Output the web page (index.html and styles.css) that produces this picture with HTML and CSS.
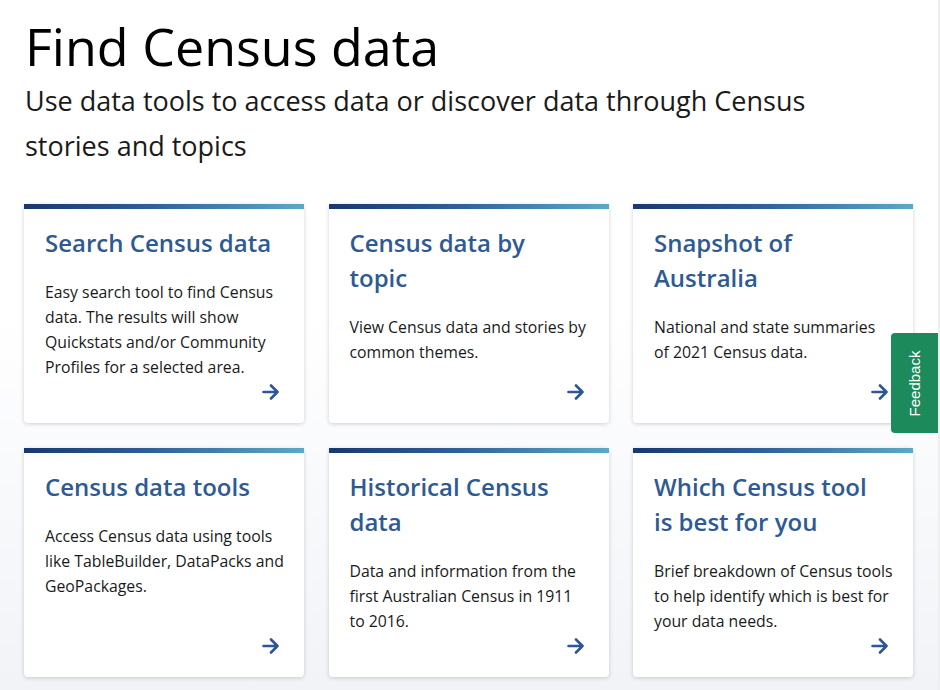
FILE: index.html
```html
<!DOCTYPE html>
<html lang="en">
<head>
    <meta charset="UTF-8">
    <title>Find Census data</title>
    <link rel="stylesheet" href="styles.css">
</head>
<body>
<div class="page">
    <h1>Find Census data</h1>
    <p class="intro">Use data tools to access data or discover data through Census stories and topics</p>

    <div class="cards">
        <a class="card" href="#">
            <h2>Search Census data</h2>
            <p>Easy search tool to find Census data. The results will show Quickstats and/or Community Profiles for a selected area.</p>
            <span class="arrow"><svg width="18" height="16" viewBox="0 0 18 16"><path d="M1.5 8h14M9 1.5 15.5 8 9 14.5" fill="none" stroke="#2c5696" stroke-width="2.6" stroke-linecap="round" stroke-linejoin="round"/></svg></span>
        </a>
        <a class="card" href="#">
            <h2>Census data by topic</h2>
            <p>View Census data and stories by common themes.</p>
            <span class="arrow"><svg width="18" height="16" viewBox="0 0 18 16"><path d="M1.5 8h14M9 1.5 15.5 8 9 14.5" fill="none" stroke="#2c5696" stroke-width="2.6" stroke-linecap="round" stroke-linejoin="round"/></svg></span>
        </a>
        <a class="card" href="#">
            <h2>Snapshot of Australia</h2>
            <p>National and state summaries of 2021 Census data.</p>
            <span class="arrow"><svg width="18" height="16" viewBox="0 0 18 16"><path d="M1.5 8h14M9 1.5 15.5 8 9 14.5" fill="none" stroke="#2c5696" stroke-width="2.6" stroke-linecap="round" stroke-linejoin="round"/></svg></span>
        </a>
        <a class="card" href="#">
            <h2>Census data tools</h2>
            <p>Access Census data using tools like TableBuilder, DataPacks and GeoPackages.</p>
            <span class="arrow"><svg width="18" height="16" viewBox="0 0 18 16"><path d="M1.5 8h14M9 1.5 15.5 8 9 14.5" fill="none" stroke="#2c5696" stroke-width="2.6" stroke-linecap="round" stroke-linejoin="round"/></svg></span>
        </a>
        <a class="card" href="#">
            <h2>Historical Census data</h2>
            <p>Data and information from the first Australian Census in 1911 to 2016.</p>
            <span class="arrow"><svg width="18" height="16" viewBox="0 0 18 16"><path d="M1.5 8h14M9 1.5 15.5 8 9 14.5" fill="none" stroke="#2c5696" stroke-width="2.6" stroke-linecap="round" stroke-linejoin="round"/></svg></span>
        </a>
        <a class="card" href="#">
            <h2>Which Census tool is best for you</h2>
            <p>Brief breakdown of Census tools to help identify which is best for your data needs.</p>
            <span class="arrow"><svg width="18" height="16" viewBox="0 0 18 16"><path d="M1.5 8h14M9 1.5 15.5 8 9 14.5" fill="none" stroke="#2c5696" stroke-width="2.6" stroke-linecap="round" stroke-linejoin="round"/></svg></span>
        </a>
    </div>
</div>
<a class="feedback" href="#"><span>Feedback</span></a>
</body>
</html>
```

FILE: styles.css
```css
html, body {
    margin: 0;
    height: 100%;
}

body {
    font-family: "Open Sans", "Noto Sans", sans-serif;
    color: #1a1a1a;
    background: linear-gradient(to bottom, #ffffff 0%, #ffffff 45%, #f1f3f7 100%);
    border-right: 2px solid #efefef;
    box-sizing: border-box;
}

.page {
    width: 889px;
    padding: 14px 0 0 24px;
}

h1 {
    font-size: 52px;
    font-weight: 400;
    line-height: 64px;
    margin: 0 0 0 1px;
    color: #000;
}

.intro {
    max-width: 830px;
    font-size: 27px;
    line-height: 45px;
    margin: 0 0 36px 1px;
    color: #1a1a1a;
}

.cards {
    display: grid;
    grid-template-columns: repeat(3, 1fr);
    column-gap: 24.5px;
    row-gap: 25px;
}

.card {
    display: flex;
    flex-direction: column;
    background: #fff;
    border-radius: 4px;
    border-top: 5px solid transparent;
    border-image: linear-gradient(to right, #18386e, #2f5f99 45%, #5aaac8) 1;
    border-image-width: 5px 0 0 0;
    box-shadow: 0 1px 4px rgba(0, 0, 0, 0.18);
    padding: 16px 19.5px 23px 21px;
    text-decoration: none;
    color: inherit;
}

.card h2 {
    max-width: 230px;
    font-size: 24px;
    font-weight: 600;
    line-height: 35px;
    color: #2e5a94;
    margin: 0 0 20px;
}

.card p {
    font-size: 15.8px;
    line-height: 25px;
    margin: 0;
    color: #1a1a1a;
}

.arrow {
    margin-top: auto;
    padding-top: 4px;
    align-self: flex-end;
    height: 16px;
    margin-right: 4.5px;
}

.arrow svg {
    display: block;
}

.feedback {
    position: fixed;
    right: 2px;
    top: 333px;
    width: 47px;
    height: 100px;
    background: #1c8a5a;
    border-radius: 4px 0 0 4px;
    display: flex;
    align-items: center;
    justify-content: center;
    text-decoration: none;
}

.feedback span {
    display: block;
    transform: rotate(-90deg);
    color: #fff;
    font-family: "Liberation Sans", Arial, sans-serif;
    font-size: 15px;
    white-space: nowrap;
}
```
